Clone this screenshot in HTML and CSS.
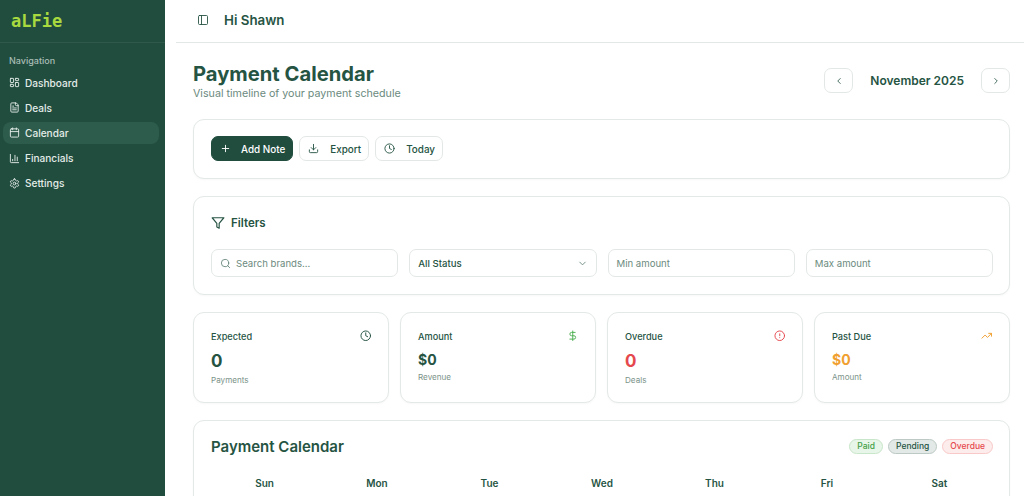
FILE: index.html
```html
<!doctype html>
<html lang="en">
<head>
  <meta charset="utf-8">
  <title>Payment Calendar</title>
  <link rel="stylesheet" href="styles.css">
</head>
<body>
  <aside class="sidebar">
    <div class="brand"><span class="logo">aLFie</span></div>
    <div class="nav-label">Navigation</div>
    <nav class="nav">
      <a class="nav-item">
        <svg class="icon" viewBox="0 0 24 24"><rect x="3" y="3" width="7" height="9" rx="1"/><rect x="14" y="3" width="7" height="5" rx="1"/><rect x="14" y="12" width="7" height="9" rx="1"/><rect x="3" y="16" width="7" height="5" rx="1"/></svg>
        Dashboard
      </a>
      <a class="nav-item">
        <svg class="icon" viewBox="0 0 24 24"><path d="M15 2H6a2 2 0 0 0-2 2v16a2 2 0 0 0 2 2h12a2 2 0 0 0 2-2V7z"/><path d="M14 2v4a2 2 0 0 0 2 2h4"/><path d="M10 9H8"/><path d="M16 13H8"/><path d="M16 17H8"/></svg>
        Deals
      </a>
      <a class="nav-item active">
        <svg class="icon" viewBox="0 0 24 24"><path d="M8 2v4"/><path d="M16 2v4"/><rect x="3" y="4" width="18" height="18" rx="2"/><path d="M3 10h18"/></svg>
        Calendar
      </a>
      <a class="nav-item">
        <svg class="icon" viewBox="0 0 24 24"><path d="M3 3v16a2 2 0 0 0 2 2h16"/><path d="M18 17V9"/><path d="M13 17V5"/><path d="M8 17v-3"/></svg>
        Financials
      </a>
      <a class="nav-item">
        <svg class="icon" viewBox="0 0 24 24"><path d="M12.22 2h-.44a2 2 0 0 0-2 2v.18a2 2 0 0 1-1 1.73l-.43.25a2 2 0 0 1-2 0l-.15-.08a2 2 0 0 0-2.73.73l-.22.38a2 2 0 0 0 .73 2.73l.15.1a2 2 0 0 1 1 1.72v.51a2 2 0 0 1-1 1.74l-.15.09a2 2 0 0 0-.73 2.73l.22.38a2 2 0 0 0 2.73.73l.15-.08a2 2 0 0 1 2 0l.43.25a2 2 0 0 1 1 1.73V20a2 2 0 0 0 2 2h.44a2 2 0 0 0 2-2v-.18a2 2 0 0 1 1-1.73l.43-.25a2 2 0 0 1 2 0l.15.08a2 2 0 0 0 2.73-.73l.22-.39a2 2 0 0 0-.73-2.73l-.15-.08a2 2 0 0 1-1-1.74v-.5a2 2 0 0 1 1-1.74l.15-.09a2 2 0 0 0 .73-2.73l-.22-.38a2 2 0 0 0-2.73-.73l-.15.08a2 2 0 0 1-2 0l-.43-.25a2 2 0 0 1-1-1.73V4a2 2 0 0 0-2-2z"/><circle cx="12" cy="12" r="3"/></svg>
        Settings
      </a>
    </nav>
  </aside>

  <div class="main">
    <header class="topbar">
      <svg class="icon toggle" viewBox="0 0 24 24"><rect x="3" y="3" width="18" height="18" rx="2"/><path d="M9 3v18"/></svg>
      <span class="greeting">Hi Shawn</span>
    </header>

    <main class="content">
      <div class="page-head">
        <div>
          <h1 class="page-title">Payment Calendar</h1>
          <p class="page-sub">Visual timeline of your payment schedule</p>
        </div>
        <div class="month-nav">
          <button class="month-btn"><svg class="icon" viewBox="0 0 24 24"><path d="m15 18-6-6 6-6"/></svg></button>
          <span class="month-name">November 2025</span>
          <button class="month-btn"><svg class="icon" viewBox="0 0 24 24"><path d="m9 18 6-6-6-6"/></svg></button>
        </div>
      </div>

      <section class="card toolbar">
        <button class="btn btn-primary"><svg class="icon" viewBox="0 0 24 24"><path d="M5 12h14"/><path d="M12 5v14"/></svg>Add Note</button>
        <button class="btn"><svg class="icon" viewBox="0 0 24 24"><path d="M21 15v4a2 2 0 0 1-2 2H5a2 2 0 0 1-2-2v-4"/><path d="m7 10 5 5 5-5"/><path d="M12 15V3"/></svg>Export</button>
        <button class="btn"><svg class="icon" viewBox="0 0 24 24"><circle cx="12" cy="12" r="10"/><path d="M12 6v6l4 2"/></svg>Today</button>
      </section>

      <section class="card filters">
        <h2 class="filters-title"><svg class="icon" viewBox="0 0 24 24"><path d="M22 3H2l8 9.46V19l4 2v-8.54z"/></svg>Filters</h2>
        <div class="filter-row">
          <div class="field"><svg class="icon" viewBox="0 0 24 24"><circle cx="11" cy="11" r="8"/><path d="m21 21-4.3-4.3"/></svg><span class="placeholder">Search brands...</span></div>
          <div class="field select"><span>All Status</span><svg class="icon" viewBox="0 0 24 24"><path d="m6 9 6 6 6-6"/></svg></div>
          <div class="field"><span class="placeholder">Min amount</span></div>
          <div class="field"><span class="placeholder">Max amount</span></div>
        </div>
      </section>

      <section class="stats">
        <div class="card stat">
          <div class="stat-head"><span>Expected</span><svg class="icon" viewBox="0 0 24 24"><circle cx="12" cy="12" r="10"/><path d="M12 6v6l4 2"/></svg></div>
          <div class="stat-value big">0</div>
          <div class="stat-note">Payments</div>
        </div>
        <div class="card stat">
          <div class="stat-head"><span>Amount</span><svg class="icon green" viewBox="0 0 24 24"><path d="M12 2v20"/><path d="M17 5H9.5a3.5 3.5 0 0 0 0 7h5a3.5 3.5 0 0 1 0 7H6"/></svg></div>
          <div class="stat-value">$0</div>
          <div class="stat-note">Revenue</div>
        </div>
        <div class="card stat">
          <div class="stat-head"><span>Overdue</span><svg class="icon red" viewBox="0 0 24 24"><circle cx="12" cy="12" r="10"/><path d="M12 8v4"/><path d="M12 16h.01"/></svg></div>
          <div class="stat-value big red">0</div>
          <div class="stat-note">Deals</div>
        </div>
        <div class="card stat">
          <div class="stat-head"><span>Past Due</span><svg class="icon orange" viewBox="0 0 24 24"><path d="M22 7l-8.5 8.5-5-5L2 17"/><path d="M16 7h6v6"/></svg></div>
          <div class="stat-value orange">$0</div>
          <div class="stat-note">Amount</div>
        </div>
      </section>

      <section class="card calendar">
        <div class="calendar-head">
          <h2 class="calendar-title">Payment Calendar</h2>
          <div class="legend">
            <span class="pill pill-paid">Paid</span>
            <span class="pill pill-pending">Pending</span>
            <span class="pill pill-overdue">Overdue</span>
          </div>
        </div>
        <div class="weekdays">
          <span>Sun</span><span>Mon</span><span>Tue</span><span>Wed</span><span>Thu</span><span>Fri</span><span>Sat</span>
        </div>
      </section>
    </main>
  </div>
</body>
</html>
```

FILE: styles.css
```css
* {
  box-sizing: border-box;
}

html, body {
  height: 100%;
}

body {
  margin: 0;
  display: flex;
  overflow: hidden;
  background: #fff;
  color: #265443;
  font-family: 'Inter', 'Liberation Sans', sans-serif;
}

.icon {
  width: 14px;
  height: 14px;
  flex: none;
  fill: none;
  stroke: currentColor;
  stroke-width: 2;
  stroke-linecap: round;
  stroke-linejoin: round;
}

/* sidebar */
.sidebar {
  width: 165px;
  flex: none;
  background: #214d3f;
  color: #e4ece8;
}

.brand {
  height: 43px;
  padding: 9px 11px 0;
  border-bottom: 1px solid #2f5a4b;
}

.logo {
  font-family: 'DejaVu Sans Mono', monospace;
  font-size: 17px;
  line-height: 24px;
  font-weight: 700;
  color: #a8d93f;
}

.nav-label {
  padding: 12px 9px 0;
  font-size: 9px;
  line-height: 12px;
  font-weight: 500;
  color: #a9bdb5;
}

.nav {
  display: flex;
  flex-direction: column;
  gap: 3.2px;
  padding: 4.5px 6px 0 3px;
}

.nav-item {
  display: flex;
  align-items: center;
  gap: 5px;
  height: 22px;
  padding: 0 6px;
  border-radius: 8px;
  font-size: 10.1px;
  font-weight: 500;
}

.nav-item .icon {
  width: 11px;
  height: 11px;
}

.nav-item.active {
  background: #2d5c4c;
}

/* main */
.main {
  flex: 1;
  min-width: 0;
  padding-left: 11px;
}

.topbar {
  display: flex;
  align-items: center;
  gap: 15px;
  height: 43px;
  padding: 0 0 2px 21px;
  border-bottom: 1px solid #e3e8e6;
}

.toggle {
  width: 12px;
  height: 12px;
  stroke-width: 1.8;
}

.greeting {
  font-size: 13.3px;
  font-weight: 600;
}

.content {
  padding: 17px 14px 0 17px;
}

.page-head {
  display: flex;
  justify-content: space-between;
  align-items: center;
  height: 42px;
  margin-bottom: 17px;
}

.page-title {
  margin: 0;
  font-size: 20.2px;
  line-height: 26px;
  font-weight: 700;
}

.page-sub {
  margin: 0;
  font-size: 10.7px;
  line-height: 14px;
  color: #6b8a7e;
}

.month-nav {
  display: flex;
  align-items: center;
  gap: 17px;
  margin-top: -1px;
}

.month-btn {
  display: flex;
  align-items: center;
  justify-content: center;
  width: 29px;
  height: 25px;
  padding: 0;
  background: #fff;
  color: #265443;
  border: 1px solid #e3e8e6;
  border-radius: 7px;
}

.month-btn .icon {
  width: 10px;
  height: 10px;
}

.month-name {
  font-size: 12px;
  font-weight: 600;
}

.card {
  background: #fff;
  border: 1px solid #e3e9e6;
  border-radius: 11px;
  box-shadow: 0 1px 2px rgba(0, 0, 0, 0.03);
}

.toolbar {
  display: flex;
  gap: 6px;
  height: 60px;
  padding: 16px 17px;
  margin-bottom: 17px;
}

.btn {
  display: flex;
  align-items: center;
  gap: 11px;
  height: 25px;
  padding: 0 7px 0 8px;
  background: #fff;
  color: #265443;
  border: 1px solid #e3e8e6;
  border-radius: 7px;
  font-family: inherit;
  font-size: 9.9px;
  font-weight: 500;
}

.btn .icon {
  width: 11px;
  height: 11px;
}

.btn-primary {
  gap: 10px;
  background: #214d3f;
  border-color: #214d3f;
  color: #fff;
}

.filters {
  height: 99px;
  padding: 17px 16px 17px 17px;
  margin-bottom: 17px;
}

.filters-title {
  display: flex;
  align-items: center;
  gap: 6px;
  margin: 0 0 17px;
  height: 18px;
  font-size: 11.5px;
  font-weight: 600;
}

.filter-row {
  display: grid;
  grid-template-columns: repeat(4, 1fr);
  gap: 11px;
}

.field {
  display: flex;
  align-items: center;
  gap: 5px;
  height: 28px;
  padding: 0 8px;
  border: 1px solid #e3e8e6;
  border-radius: 7px;
  font-size: 9.6px;
  font-weight: 500;
}

.field .icon {
  width: 11px;
  height: 11px;
  color: #6b8a7e;
}

.field.select {
  justify-content: space-between;
}

.placeholder {
  color: #6b8a7e;
  font-weight: 400;
}

.stats {
  display: grid;
  grid-template-columns: repeat(4, 1fr);
  gap: 11px;
  margin-bottom: 17px;
}

.stat {
  height: 91px;
  padding: 16px 17px 0;
}

.stat-head {
  display: flex;
  justify-content: space-between;
  align-items: center;
  height: 14px;
  margin-bottom: 7px;
  font-size: 9.2px;
  font-weight: 500;
}

.stat-head .icon {
  width: 11.5px;
  height: 11.5px;
}

.stat-value {
  font-size: 14px;
  line-height: 20px;
  font-weight: 700;
}

.stat-value.big {
  font-size: 17px;
  line-height: 23px;
}

.stat-note {
  margin-top: 1px;
  font-size: 8.1px;
  line-height: 12px;
  color: #7b9389;
}

.green {
  color: #4caf50;
}

.red {
  color: #e5484d;
}

.orange {
  color: #f0a030;
}

.calendar {
  padding: 16px 16px 17px 17px;
}

.calendar-head {
  display: flex;
  justify-content: space-between;
  align-items: center;
  height: 18px;
  margin-bottom: 22px;
}

.calendar-title {
  margin: 0;
  font-size: 15px;
  font-weight: 600;
}

.legend {
  display: flex;
  gap: 5px;
}

.pill {
  padding: 1px 7px;
  border: 1px solid;
  border-radius: 999px;
  font-size: 8.5px;
  line-height: 11px;
  font-weight: 500;
}

.pill-paid {
  background: #e8f5e9;
  border-color: #c8e6c9;
  color: #43a047;
}

.pill-pending {
  background: #e3e9e7;
  border-color: #bcc9c4;
  color: #265443;
}

.pill-overdue {
  background: #fdecec;
  border-color: #f9c9c9;
  color: #e5484d;
}

.weekdays {
  display: grid;
  grid-template-columns: repeat(7, 1fr);
  column-gap: 5.5px;
  text-align: center;
  font-size: 10px;
  font-weight: 600;
}
```
